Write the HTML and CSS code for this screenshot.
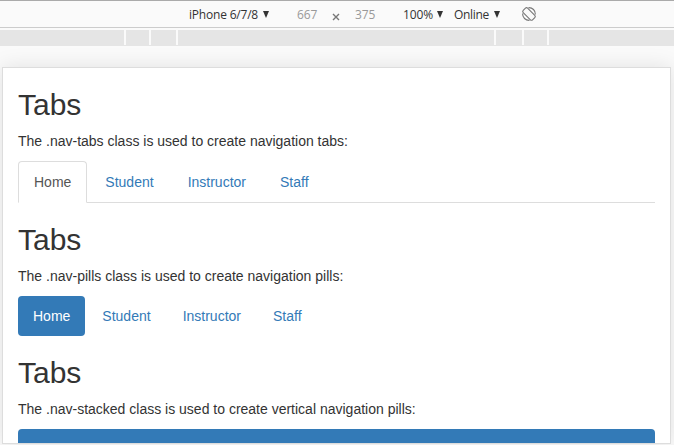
FILE: index.html
```html
<!DOCTYPE html>
<html lang="en"><head><meta charset="utf-8"><title>Tabs</title><link rel="stylesheet" href="styles.css"></head>
<body>
<header class="toolbar">
<span class="device">iPhone 6/7/8<i class="caret"></i></span><span class="width">667</span><svg class="times" viewBox="0 0 8 8"><path d="M1 1l6 6M7 1L1 7"/></svg><span class="height">375</span><span class="scale">100%<i class="caret"></i></span><span class="network">Online<i class="caret"></i></span>
<svg class="rotate" viewBox="0 0 16 16"><g fill="none" stroke="#777" stroke-width="1.1"><rect x="4.9" y="1.4" width="6.2" height="13.2" rx="1.5" transform="rotate(-45 8 8)"/><path d="M7.5 1.6A6.5 6.5 0 0 1 14.4 8.5M8.5 14.4A6.5 6.5 0 0 1 1.6 7.5"/></g></svg>
</header>
<div class="breakpoints"><i></i><i></i><i></i><i></i><i></i><i></i><i></i></div>
<main class="screen">
<section><h2>Tabs</h2><p>The .nav-tabs class is used to create navigation tabs:</p>
<nav class="tabs"><a class="active">Home</a><a>Student</a><a>Instructor</a><a>Staff</a></nav></section>
<section><h2>Tabs</h2><p>The .nav-pills class is used to create navigation pills:</p>
<nav class="pills"><a class="active">Home</a><a>Student</a><a>Instructor</a><a>Staff</a></nav></section>
<section><h2>Tabs</h2><p>The .nav-stacked class is used to create vertical navigation pills:</p>
<nav class="stacked"><a class="active"></a></nav></section>
</main>
</body></html>
```
FILE: styles.css
```css
* { box-sizing: border-box; }
body { margin: 0; height: 445px; overflow: hidden; background: #fafafa; color: #333; font: 14px/20px "Liberation Sans", Arial, sans-serif; }
.toolbar { height: 28px; padding: 2px 0 0 189px; border-top: 1px solid #aaa; border-bottom: 1px solid #ccc; display: flex; align-items: center; font: 12px/16px "Open Sans", sans-serif; letter-spacing: -.15px; white-space: nowrap; }
.toolbar span { flex: none; }
.device { width: 108px; letter-spacing: -.2px; }
.width { width: 34px; color: #999; }
.times { width: 8px; height: 8px; margin: 3px 15px 0 1px; fill: none; stroke: #777; stroke-width: 1.4; }
.height { width: 48px; color: #999; }
.scale { width: 51px; }
.network { width: 67px; letter-spacing: -.3px; }
.caret { display: inline-block; border: 3.5px solid transparent; border-top: 7px solid #333; border-bottom: 0; margin-left: 4.5px; vertical-align: 1px; }
.rotate { width: 16px; height: 16px; margin-top: -2px; }
.breakpoints { height: 18px; padding-top: 2px; display: grid; grid-template-columns: 124px 23px 25px 316px 26px 23px 1fr; gap: 2px; box-shadow: inset 0 -1px #e5e5e5; }
.breakpoints i { background: #e5e5e5; }
.screen { margin: 21px 3px 0 2px; height: 377px; padding: 0 15px; overflow: hidden; background: #fff; border: 1px solid #ddd; box-shadow: 0 0 20px rgba(0,0,0,.1); }
h2 { margin: 20px 0 10px; font-size: 30px; line-height: 33px; font-weight: 400; }
p { margin: 0 0 10px; }
nav { display: flex; }
a { color: #337ab7; padding: 10px 15px; border-radius: 4px; }
.tabs { border-bottom: 1px solid #ddd; }
.tabs a { margin: 0 2px -1px 0; border: 1px solid transparent; border-radius: 4px 4px 0 0; }
.tabs .active { color: #555; border-color: #ddd #ddd #fff; background: #fff; }
.pills a + a { margin-left: 2px; }
.pills .active, .stacked .active { background: #337ab7; color: #fff; }
.stacked a { flex: 1; min-height: 40px; }
```
